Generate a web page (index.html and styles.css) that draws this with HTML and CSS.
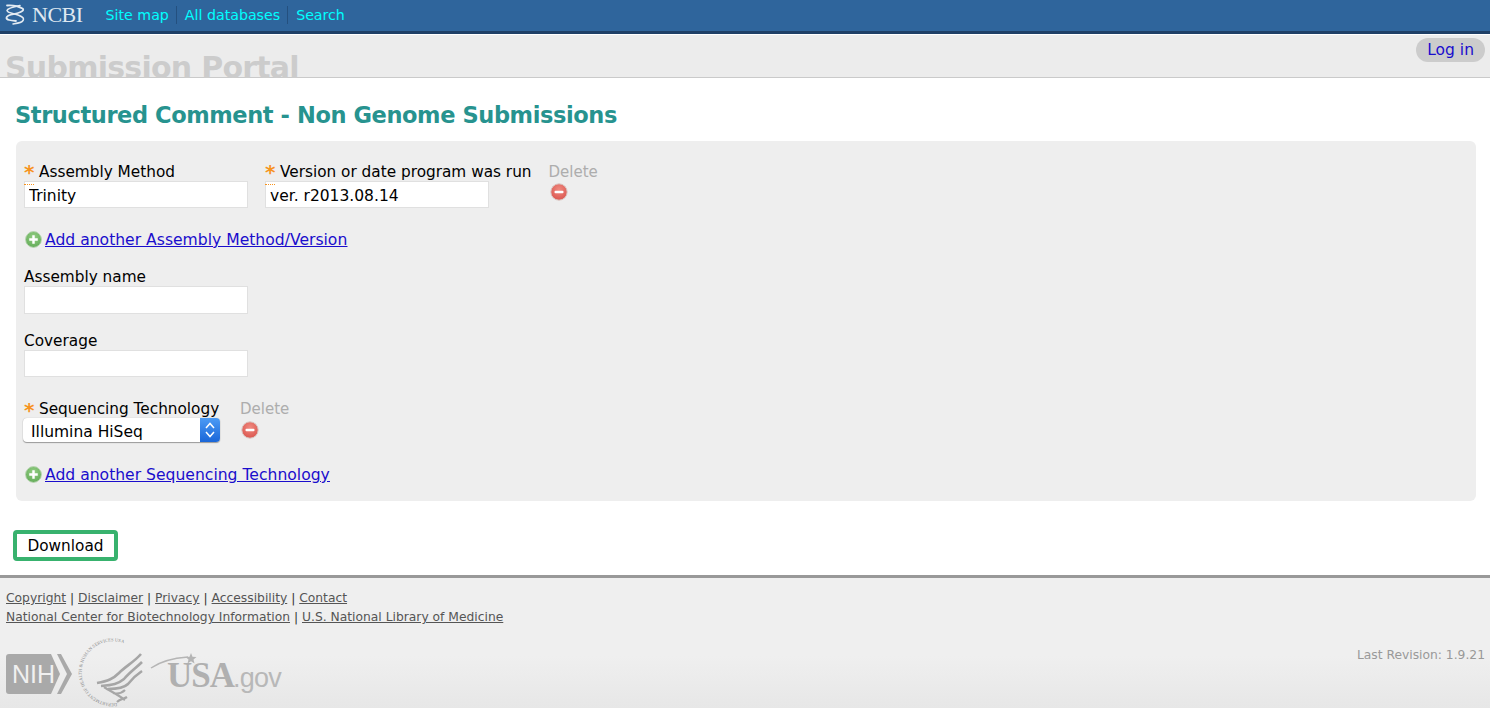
FILE: index.html
```html
<!DOCTYPE html>
<html lang="en">
<head>
<meta charset="utf-8">
<title>Submission Portal</title>
<link rel="stylesheet" href="styles.css">
</head>
<body>
<svg class="defs" width="0" height="0" aria-hidden="true">
  <defs>
    <radialGradient id="redball" cx="50%" cy="35%" r="70%"><stop offset="0" stop-color="#f08a80"/><stop offset="1" stop-color="#d9534c"/></radialGradient>
    <radialGradient id="greenball" cx="50%" cy="35%" r="70%"><stop offset="0" stop-color="#95cf85"/><stop offset="1" stop-color="#5fa955"/></radialGradient>
  </defs>
</svg>
<nav class="topbar">
  <a class="brand" href="#">
    <svg class="helix" width="20" height="21" viewBox="0 0 20 21" aria-hidden="true">
      <path d="M2 1.500C7 1 13 2 17.500 4.500 19.500 6 17 8 13 9 8 10.500 2 10.500 1.500 13.500 1 16 6 16.500 11 17" fill="none" stroke="#e4ebf2" stroke-width="1.800" stroke-linecap="round"/>
      <path d="M15 1.500C10 2.500 2.500 4 2 6.500 2 9 9 9.500 13 11 17 12.500 19.500 14 18 16.500 16.500 19 11 19.500 8 20" fill="none" stroke="#e4ebf2" stroke-width="1.500" stroke-linecap="round"/>
    </svg>
    <span>NCBI</span>
  </a>
  <ul class="toplinks">
    <li><a href="#">Site map</a></li>
    <li><a href="#">All databases</a></li>
    <li><a href="#">Search</a></li>
  </ul>
</nav>
<header class="portal">
  <div class="portal-title">Submission Portal</div>
  <a class="login" href="#">Log in</a>
</header>
<main class="content">
  <h1>Structured Comment - Non Genome Submissions</h1>
  <form class="panel">
    <div class="row">
      <div class="field">
        <label><span class="req">*</span>Assembly Method</label>
        <div class="inputwrap marked"><input type="text" value="Trinity"></div>
      </div>
      <div class="field">
        <label><span class="req">*</span>Version or date program was run</label>
        <div class="inputwrap marked"><input type="text" value="ver. r2013.08.14"></div>
      </div>
      <div class="del">
        <span>Delete</span>
        <svg class="round" width="18" height="18" viewBox="0 0 18 18" aria-hidden="true"><circle cx="9" cy="9" r="8.200" fill="url(#redball)" stroke="#d8c8c4"/><rect x="4.500" y="7.700" width="9" height="2.600" rx="1" fill="#fff"/></svg>
      </div>
    </div>
    <a class="add first" href="#">
      <svg class="round" width="17" height="17" viewBox="0 0 18 18" aria-hidden="true"><circle cx="9" cy="9" r="8.400" fill="url(#greenball)" stroke="#b9d4b3"/><path d="M9 4.500v9M4.500 9h9" stroke="#fff" stroke-width="2.600"/></svg>
      <u>Add another Assembly Method/Version</u>
    </a>
    <div class="field single">
      <label>Assembly name</label>
      <div class="inputwrap"><input class="tall" type="text"></div>
    </div>
    <div class="field single">
      <label>Coverage</label>
      <div class="inputwrap"><input type="text"></div>
    </div>
    <div class="row seq">
      <div class="field">
        <label><span class="req">*</span>Sequencing Technology</label>
        <div class="select">
          <span class="select-text">Illumina HiSeq</span>
          <span class="select-arrow">
            <svg width="12" height="20" viewBox="0 0 12 20" aria-hidden="true"><path d="M2 8 6 3.500 10 8M2 12 6 16.500 10 12" fill="none" stroke="#fff" stroke-width="1.500"/></svg>
          </span>
        </div>
      </div>
      <div class="del">
        <span>Delete</span>
        <svg class="round" width="18" height="18" viewBox="0 0 18 18" aria-hidden="true"><circle cx="9" cy="9" r="8.200" fill="url(#redball)" stroke="#d8c8c4"/><rect x="4.500" y="7.700" width="9" height="2.600" rx="1" fill="#fff"/></svg>
      </div>
    </div>
    <a class="add last" href="#">
      <svg class="round" width="17" height="17" viewBox="0 0 18 18" aria-hidden="true"><circle cx="9" cy="9" r="8.400" fill="url(#greenball)" stroke="#b9d4b3"/><path d="M9 4.500v9M4.500 9h9" stroke="#fff" stroke-width="2.600"/></svg>
      <u>Add another Sequencing Technology</u>
    </a>
  </form>
  <button class="download" type="button">Download</button>
</main>
<footer class="footer">
  <div class="footer-top">
    <div class="flinks">
      <p><a href="#">Copyright</a> | <a href="#">Disclaimer</a> | <a href="#">Privacy</a> | <a href="#">Accessibility</a> | <a href="#">Contact</a></p>
      <p><a href="#">National Center for Biotechnology Information</a> | <a href="#">U.S. National Library of Medicine</a></p>
    </div>
    <div class="revision">Last Revision: 1.9.21</div>
  </div>
  <div class="logos">
    <svg class="nih" width="66" height="42" viewBox="0 0 66 42" role="img" aria-label="NIH">
      <path d="M3 1H45L54 21 45 41H3Q0 41 0 38V4Q0 1 3 1Z" fill="#a9a9a9"/>
      <path d="M51 1H55L66 21 55 41H51L61 21Z" fill="#a9a9a9"/>
      <text x="6" y="30" class="nih-text">NIH</text>
    </svg>
    <svg class="hhs" width="64" height="66" viewBox="0 0 64 66" role="img" aria-label="Department of Health and Human Services USA">
      <path id="seal" d="M37 63A31 31 0 1 1 52 8" fill="none"/>
      <text class="seal-text"><textPath href="#seal">DEPARTMENT OF HEALTH &amp; HUMAN SERVICES USA</textPath></text>
      <path d="M61 14C54 22 46 26 39 33 33 39 28 41 17 43" fill="none" stroke="#a6a6a6" stroke-width="2.600"/>
      <path d="M62 22C56 28 50 32 44 39 38 44 33 45 21 46" fill="none" stroke="#a6a6a6" stroke-width="2.600"/>
      <path d="M62 31C56 35 52 39 48 44 44 48 38 49 28 49" fill="none" stroke="#a6a6a6" stroke-width="2.600"/>
      <path d="M24 47C30 51 37 54 45 60M33 53C37 54 42 53 45 50M37 62C40 59 44 59 47 57" fill="none" stroke="#a6a6a6" stroke-width="2.200"/>
    </svg>
    <svg class="usa" width="132" height="44" viewBox="0 0 132 44" role="img" aria-label="USA.gov">
      <path d="M1 15C11 8 24 5 38 4" fill="none" stroke="#b5b5b5" stroke-width="1.500"/>
      <path d="M41 0l1.500 3.700 4 .300-3 2.500 1 4-3.500-2.200-3.500 2.200 1-4-3-2.500 4-.300z" fill="#b5b5b5"/>
      <text x="17" y="34" class="usa-text">USA</text>
      <text x="83" y="34" class="gov-text">.gov</text>
    </svg>
  </div>
</footer>
</body>
</html>
```
FILE: styles.css
```css
* { box-sizing: border-box; }
html, body { margin: 0; height: 100%; }
body {
  display: flex;
  flex-direction: column;
  overflow: hidden;
  background: #fff;
  color: #000;
  font-family: "DejaVu Sans", sans-serif;
  font-size: 15.5px;
}
.defs { position: absolute; }
.topbar {
  flex: none;
  display: flex;
  align-items: center;
  height: 34px;
  padding: 0 0 2px 5px;
  background: #2f659c;
  border-bottom: 3px solid #1e3f66;
}
.brand {
  display: flex;
  align-items: center;
  gap: 7px;
  color: #dfe8f1;
  text-decoration: none;
  font: 22px "Liberation Serif", serif;
  letter-spacing: -0.5px;
}
.toplinks {
  display: flex;
  list-style: none;
  margin: 0 0 0 23px;
  padding: 0;
  font-size: 14.2px;
}
.toplinks li { padding: 0 7px 0 8px; border-left: 1px solid #24507f; line-height: 18px; }
.toplinks li:first-child { padding-left: 0; border-left: 0; }
.toplinks a { color: #0ff; text-decoration: none; }
.portal {
  flex: none;
  position: relative;
  display: flex;
  justify-content: space-between;
  height: 44px;
  padding: 3px 5px 0;
  background: #ececec;
  border-bottom: 1px solid #cacaca;
  border-top: 1px solid #fff;
}
.portal-title {
  margin-top: 12px;
  font-size: 30px;
  font-weight: 700;
  letter-spacing: -0.75px;
  line-height: 36px;
  color: #cccccc;
  white-space: nowrap;
}
.login {
  height: 24px;
  padding: 0 11px;
  border-radius: 12px;
  background: #cccccc;
  color: #1a0dcc;
  text-decoration: none;
  line-height: 24px;
}
.content { flex: none; padding: 0 14px 0 13px; }
h1 {
  margin: 22px 0 11px 2px;
  font-size: 22.500px;
  font-weight: 700;
  letter-spacing: -0.4px;
  line-height: 30px;
  color: #27938f;
}
.panel {
  margin: 0 0 29px 3px;
  padding: 20px 8px 16px;
  background: #eeeeee;
  border-radius: 6px;
}
.row { display: flex; gap: 17px; }
.field { display: flex; flex-direction: column; }
.field label { padding-top: 2px; font-size: 15.3px; line-height: 18px; white-space: nowrap; }
.req {
  display: inline-block;
  width: 15px;
  color: #f7931e;
  font-size: 20px;
  font-weight: 700;
  line-height: 16px;
  vertical-align: top;
  padding-top: 1px;
}
.inputwrap { position: relative; width: 224px; }
.inputwrap input {
  display: block;
  width: 100%;
  height: 27px;
  padding: 2px 4px 0;
  border: 1px solid #e0e0e0;
  background: #fff;
  font: 15.500px "DejaVu Sans", sans-serif;
  color: #000;
  outline: 0;
}
.inputwrap input.tall { height: 28px; }
.marked::before {
  content: "";
  position: absolute;
  left: 0;
  top: 3px;
  width: 10px;
  border-top: 1px dotted #f7931e;
}
.del { display: flex; flex-direction: column; align-items: flex-start; color: #adadad; padding-top: 2px; font-size: 15px; line-height: 18px; }
.del .round { margin: 2px 0 0 1px; }
.add {
  display: flex;
  align-items: center;
  gap: 3px;
  height: 20px;
  margin-top: 21px;
  padding-left: 1px;
  font-size: 15.6px;
  color: #1a0dcc;
  white-space: nowrap;
}
.add .round { margin-top: -1px; }
.add.first { margin-top: 22px; margin-bottom: 16px; }
.add.last { margin-top: 23px; }
.field.single { margin-bottom: 16px; }
.row.seq { margin-top: 20px; gap: 20px; }
.row.seq label { padding-top: 4px; line-height: 16px; }
.row.seq .del { padding-top: 4px; line-height: 16px; }
.row.seq .del .round { margin-top: 4px; }
.select {
  display: flex;
  width: 197px;
  height: 24px;
  margin-left: -1px;
  border-radius: 4px;
  overflow: hidden;
  background: #fff;
  box-shadow: 0 1px 1px #999, 0 0 1px #aaa;
}
.select-text { flex: 1; padding-left: 8px; line-height: 28px; }
.select-arrow {
  display: flex;
  align-items: center;
  justify-content: center;
  width: 20px;
  background: linear-gradient(#4c9bf5, #1a66d8);
}
.download {
  display: block;
  width: 105px;
  height: 31px;
  padding: 0;
  border: 4px solid #38b26e;
  border-radius: 4px;
  background: #fff;
  color: #000;
  font: 15.300px "DejaVu Sans", sans-serif;
}
.footer {
  flex: 1;
  margin-top: 14px;
  padding: 0 5px 0 6px;
  border-top: 3px solid #999;
  background: linear-gradient(#efefef 60%, #e7e7e7);
  color: #555;
  font-size: 12.300px;
}
.footer-top { display: flex; justify-content: space-between; }
.flinks { padding-top: 11px; }
.flinks p { margin: 0; line-height: 19px; color: #333; }
.flinks a { color: #555; }
.revision { margin-top: 68px; color: #999; line-height: 18px; }
.logos { display: flex; align-items: flex-start; margin-top: -18px; }
.nih { margin-top: 7px; flex: none; }
.hhs { margin-left: 8px; margin-top: -6px; flex: none; overflow: visible; }
.usa { margin-left: 6px; margin-top: 7px; flex: none; }
.nih-text { font: 25px "Liberation Sans", sans-serif; fill: #f0f0f0; }
.seal-text { font: 4.600px "Liberation Serif", serif; fill: #8c8c8c; }
.usa-text { font: 700 35px "Liberation Serif", serif; fill: #b0b0b0; letter-spacing: -1px; }
.gov-text { font: 27px "Liberation Sans", sans-serif; fill: #b8b8b8; letter-spacing: -0.8px; }
```
